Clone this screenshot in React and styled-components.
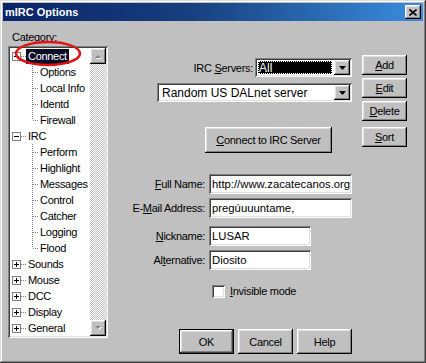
import React from 'react';
import styled, { createGlobalStyle, css } from 'styled-components';

const GlobalStyle = createGlobalStyle`
  html, body { margin: 0; padding: 0; background: #c0c0c0; }
  body { width: 426px; height: 363px; overflow: hidden; }
  * { box-sizing: border-box; }
`;

const UI_FONT = `"Liberation Sans", Arial, sans-serif`;
const FIELD_FONT = `"Liberation Sans", Arial, sans-serif`;

const raised = css`
  box-shadow: inset -1px -1px #000000, inset 1px 1px #ffffff, inset -2px -2px #808080, inset 2px 2px #dfdfdf;
`;
const sunken = css`
  box-shadow: inset 1px 1px #808080, inset -1px -1px #ffffff, inset 2px 2px #404040, inset -2px -2px #dfdfdf;
`;

const Window = styled.div`
  width: 426px;
  height: 363px;
  background: #c0c0c0;
  padding: 3px;
  box-shadow: inset -1px -1px #404040, inset 1px 1px #dfdfdf, inset -2px -2px #808080, inset 2px 2px #ffffff;
  display: flex;
  flex-direction: column;
  font-family: ${UI_FONT};
  font-size: 11px;
  letter-spacing: -0.3px;
  line-height: 14px;
  color: #000;
`;

const TitleBar = styled.div`
  height: 18px;
  flex: none;
  display: flex;
  align-items: center;
  justify-content: space-between;
  padding: 0 2px;
  background: linear-gradient(90deg, #0a246a 0%, #173f7e 45%, #3a8ee0 100%);
`;

const Title = styled.span`
  font-family: ${FIELD_FONT};
  font-weight: bold;
  font-size: 11px;
  letter-spacing: 0;
  color: #ffffff;
`;

const CloseButton = styled.div`
  width: 16px;
  height: 14px;
  background: #c0c0c0;
  ${raised};
  display: flex;
  align-items: center;
  justify-content: center;
`;

const Body = styled.div`
  flex: 1;
  display: flex;
`;

const LeftColumn = styled.div`
  width: 105px;
  padding-left: 5px;
  display: flex;
  flex-direction: column;
`;

const GroupLabel = styled.div`
  margin-top: 9px;
  padding-left: 4px;
`;

const Tree = styled.div`
  position: relative;
  margin-top: 2px;
  width: 100px;
  height: 292px;
  background: #ffffff;
  padding: 2px;
  ${sunken};
  display: flex;
`;

const TreeList = styled.div`
  flex: 1;
  display: flex;
  flex-direction: column;
`;

const Row = styled.div`
  height: 16px;
  display: flex;
  align-items: center;
  padding-left: ${(p) => (p.$child ? 22 : 2)}px;
  white-space: nowrap;
`;

const ItemLabel = styled.span`
  padding: 0 2px;
  height: 15px;
  line-height: 15px;
  ${(p) =>
    p.$selected &&
    css`
      background: #0b0b26;
      color: #ffffff;
    `}
`;

const Scrollbar = styled.div`
  width: 16px;
  display: flex;
  flex-direction: column;
`;

const ScrollTrack = styled.div`
  flex: 1;
  background: repeating-conic-gradient(#c0c0c0 0 25%, #ffffff 0 50%) 0 0 / 2px 2px;
`;

const ArrowButton = styled.div`
  width: ${(p) => p.$w || 16}px;
  height: ${(p) => p.$h || 16}px;
  flex: none;
  background: #c0c0c0;
  ${raised};
  display: flex;
  align-items: center;
  justify-content: center;
`;

const Ellipse = styled.svg`
  position: absolute;
  left: 6px;
  top: -6px;
  overflow: visible;
  pointer-events: none;
`;

const RightPanel = styled.div`
  flex: 1;
  display: flex;
  flex-direction: column;
`;

const TopSection = styled.div`
  display: flex;
  margin-top: 34px;
`;

const ServerColumn = styled.div`
  margin-left: 49px;
  margin-top: 3px;
  width: 195px;
  display: flex;
  flex-direction: column;
`;

const ServerRow = styled.div`
  display: flex;
  justify-content: flex-end;
  align-items: center;
`;

const FieldLabel = styled.span`
  margin-right: ${(p) => p.$gap ?? 2}px;
`;

const Combo = styled.div`
  width: ${(p) => p.$w}px;
  height: 19px;
  margin-top: ${(p) => p.$mt || 0}px;
  background: #ffffff;
  ${sunken};
  padding: 2px;
  display: flex;
`;

const ComboValue = styled.div`
  flex: 1;
  display: flex;
  align-items: center;
  font-family: ${FIELD_FONT};
  font-size: 12px;
  letter-spacing: 0;
  padding-left: 3px;
  white-space: nowrap;
  overflow: hidden;
  ${(p) =>
    p.$selected &&
    css`
      margin: 1px 2px 1px 1px;
      padding-left: 1px;
      background: #000000;
      color: #ffffff;
      outline: 1px dotted #ffffff;
      outline-offset: -1px;
    `}
`;

const Button = styled.div`
  width: ${(p) => p.$w}px;
  height: ${(p) => p.$h}px;
  margin-top: ${(p) => p.$mt || 0}px;
  margin-left: ${(p) => p.$ml || 0}px;
  flex: none;
  background: #c0c0c0;
  display: flex;
  align-items: center;
  justify-content: center;
  white-space: nowrap;
  ${(p) =>
    p.$default
      ? css`
          box-shadow: inset 0 0 0 1px #000000, inset -2px -2px #404040, inset 2px 2px #ffffff, inset -3px -3px #808080, inset 3px 3px #dfdfdf;
        `
      : raised}
`;

const ButtonColumn = styled.div`
  margin-left: 10px;
  display: flex;
  flex-direction: column;
  gap: 3px;
`;

const FormRow = styled.div`
  display: flex;
  align-items: center;
  margin-top: ${(p) => p.$mt}px;
`;

const FormLabel = styled.span`
  width: 97px;
  text-align: right;
  white-space: nowrap;
`;

const TextField = styled.div`
  width: ${(p) => p.$w}px;
  height: 20px;
  margin-left: 4px;
  background: #ffffff;
  ${sunken};
  padding: 0 3px;
  display: flex;
  align-items: center;
  font-family: ${FIELD_FONT};
  font-size: 11.3px;
  letter-spacing: 0;
  white-space: nowrap;
  overflow: hidden;
`;

const CheckRow = styled.div`
  display: flex;
  align-items: center;
  gap: 5px;
  margin-top: 14px;
  margin-left: 104px;
`;

const CheckBox = styled.div`
  width: 13px;
  height: 13px;
  background: #ffffff;
  ${sunken};
`;

const BottomRow = styled.div`
  display: flex;
  gap: 4px;
  margin-top: 31px;
  margin-left: 71px;
`;

const Expander = ({ open }) => (
  <svg width="9" height="9" viewBox="0 0 9 9" style={{ flex: 'none' }}>
    <rect x="0.5" y="0.5" width="8" height="8" fill="#fff" stroke="#808080" />
    <line x1="2" y1="4.5" x2="7" y2="4.5" stroke="#000" />
    {!open && <line x1="4.5" y1="2" x2="4.5" y2="7" stroke="#000" />}
  </svg>
);

const HDots = () => (
  <svg width="5" height="1" style={{ flex: 'none' }}>
    <line x1="0" y1="0.5" x2="5" y2="0.5" stroke="#808080" strokeDasharray="1 1" />
  </svg>
);

const ChildConnector = ({ last }) => (
  <svg width="6" height="16" style={{ flex: 'none' }}>
    <line x1="0.5" y1="0" x2="0.5" y2={last ? 8 : 16} stroke="#808080" strokeDasharray="1 1" />
    <line x1="1" y1="8.5" x2="6" y2="8.5" stroke="#808080" strokeDasharray="1 1" />
  </svg>
);

const GrayArrow = ({ up }) => (
  <svg width="8" height="5" viewBox="0 0 8 5">
    {up ? (
      <>
        <polygon points="4,1 7,4 1,4" fill="#ffffff" transform="translate(1,1)" />
        <polygon points="4,1 7,4 1,4" fill="#808080" />
      </>
    ) : (
      <>
        <polygon points="1,0 7,0 4,3" fill="#ffffff" transform="translate(1,1)" />
        <polygon points="1,0 7,0 4,3" fill="#808080" />
      </>
    )}
  </svg>
);

const DropArrow = () => (
  <svg width="7" height="4" viewBox="0 0 7 4">
    <polygon points="0,0 7,0 3.5,4" fill="#000" />
  </svg>
);

const tree = [
  { label: 'Connect', open: true, selected: true, children: ['Options', 'Local Info', 'Identd', 'Firewall'] },
  { label: 'IRC', open: true, children: ['Perform', 'Highlight', 'Messages', 'Control', 'Catcher', 'Logging', 'Flood'] },
  { label: 'Sounds' },
  { label: 'Mouse' },
  { label: 'DCC' },
  { label: 'Display' },
  { label: 'General' },
];

export default function App() {
  return (
    <>
      <GlobalStyle />
      <Window>
        <TitleBar>
          <Title>mIRC Options</Title>
          <CloseButton>
            <svg width="8" height="7" viewBox="0 0 8 7">
              <path d="M0.5 0.5 L7.5 6.5 M7.5 0.5 L0.5 6.5" stroke="#000" strokeWidth="1.6" />
            </svg>
          </CloseButton>
        </TitleBar>
        <Body>
          <LeftColumn>
            <GroupLabel>Category:</GroupLabel>
            <Tree>
              <TreeList>
                {tree.map((node) => (
                  <React.Fragment key={node.label}>
                    <Row>
                      <Expander open={node.open} />
                      <HDots />
                      <ItemLabel $selected={node.selected}>{node.label}</ItemLabel>
                    </Row>
                    {node.open &&
                      node.children.map((c, i) => (
                        <Row $child key={c}>
                          <ChildConnector last={i === node.children.length - 1} />
                          <ItemLabel>{c}</ItemLabel>
                        </Row>
                      ))}
                  </React.Fragment>
                ))}
              </TreeList>
              <Scrollbar>
                <ArrowButton>
                  <GrayArrow up />
                </ArrowButton>
                <ScrollTrack />
                <ArrowButton>
                  <GrayArrow />
                </ArrowButton>
              </Scrollbar>
              <Ellipse width="68" height="27" viewBox="0 0 68 27">
                <ellipse cx="34" cy="13.5" rx="32" ry="11.5" fill="none" stroke="#e31212" strokeWidth="2.6" />
              </Ellipse>
            </Tree>
          </LeftColumn>
          <RightPanel>
            <TopSection>
              <ServerColumn>
                <ServerRow>
                  <FieldLabel>
                    IRC <u>S</u>ervers:
                  </FieldLabel>
                  <Combo $w={97}>
                    <ComboValue $selected>All</ComboValue>
                    <ArrowButton $h={15}>
                      <DropArrow />
                    </ArrowButton>
                  </Combo>
                </ServerRow>
                <Combo $w={195} $mt={6}>
                  <ComboValue>Random US DALnet server</ComboValue>
                  <ArrowButton $h={15}>
                    <DropArrow />
                  </ArrowButton>
                </Combo>
                <Button $w={127} $h={26} $mt={25} $ml={48}>
                  <span>
                    <u>C</u>onnect to IRC Server
                  </span>
                </Button>
              </ServerColumn>
              <ButtonColumn>
                <Button $w={45} $h={20}>
                  <span>
                    <u>A</u>dd
                  </span>
                </Button>
                <Button $w={45} $h={20}>
                  <span>
                    <u>E</u>dit
                  </span>
                </Button>
                <Button $w={45} $h={20}>
                  <span>
                    <u>D</u>elete
                  </span>
                </Button>
                <Button $w={45} $h={20} $mt={3}>
                  <span>
                    <u>S</u>ort
                  </span>
                </Button>
              </ButtonColumn>
            </TopSection>
            <FormRow $mt={21}>
              <FormLabel>
                <u>F</u>ull Name:
              </FormLabel>
              <TextField $w={143}>http://www.zacatecanos.org</TextField>
            </FormRow>
            <FormRow $mt={4}>
              <FormLabel>
                E-<u>M</u>ail Address:
              </FormLabel>
              <TextField $w={143}>pregúuuuntame,</TextField>
            </FormRow>
            <FormRow $mt={8}>
              <FormLabel>
                <u>N</u>ickname:
              </FormLabel>
              <TextField $w={102}>LUSAR</TextField>
            </FormRow>
            <FormRow $mt={4}>
              <FormLabel>
                Al<u>t</u>ernative:
              </FormLabel>
              <TextField $w={102}>Diosito</TextField>
            </FormRow>
            <CheckRow>
              <CheckBox />
              <span>
                <u>I</u>nvisible mode
              </span>
            </CheckRow>
            <BottomRow>
              <Button $w={55} $h={25} $default>
                OK
              </Button>
              <Button $w={55} $h={25}>
                Cancel
              </Button>
              <Button $w={55} $h={25}>
                Help
              </Button>
            </BottomRow>
          </RightPanel>
        </Body>
      </Window>
    </>
  );
}
